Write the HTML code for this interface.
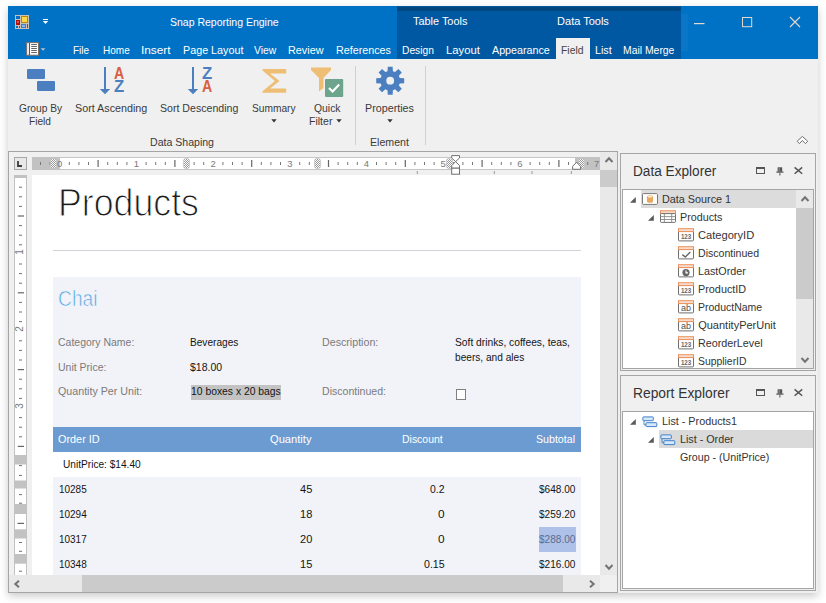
<!DOCTYPE html>
<html><head><meta charset="utf-8"><title>Snap Reporting Engine</title>
<style>
html,body{margin:0;padding:0;}
body{width:826px;height:603px;position:relative;overflow:hidden;background:#fff;font-family:"Liberation Sans", sans-serif;}
.a{position:absolute;}
.t{position:absolute;white-space:pre;font-family:"Liberation Sans", sans-serif;transform-origin:0 0;}
svg{position:absolute;overflow:visible;}
</style></head><body>
<div class="a" style="left:8px;top:6px;width:810px;height:587px;background:#F0F0F0;box-shadow:0 3px 8px rgba(0,0,0,.21);"></div>
<div class="a" style="left:8px;top:6px;width:810px;height:53px;background:#0072C6;"></div>
<div class="a" style="left:397px;top:6px;width:284px;height:53px;background:#0058A3;"></div>
<div class="a" style="left:397px;top:7px;width:284px;height:4px;background:#00467F;"></div>
<div class="a" style="left:681px;top:14px;width:7px;height:37px;background:#0A76C8;"></div>
<div class="a" style="left:556px;top:38px;width:34px;height:21px;background:#F0F0F0;"></div>
<svg style="left:15px;top:15px" width="14" height="14" viewBox="0 0 14 14">
<rect x="0" y="0" width="14" height="14" fill="#C9C3B6"/>
<rect x="1" y="1" width="4" height="3" fill="#0A6CC2"/>
<rect x="6" y="1" width="7" height="7" fill="#B8860B"/>
<rect x="7" y="2" width="5" height="5" fill="#FFD84A"/>
<rect x="1" y="5" width="4" height="5" fill="#B01010"/>
<rect x="2" y="6" width="2" height="2" fill="#E05050"/>
<rect x="1" y="11" width="2" height="2" fill="#0A6CC2"/><rect x="4" y="11" width="1" height="2" fill="#0A6CC2"/>
<rect x="6" y="9" width="5" height="4" fill="#4A78D0"/><rect x="7" y="10" width="3" height="2" fill="#8FB4F0"/>
<rect x="12" y="9" width="1" height="4" fill="#0A6CC2"/>
</svg>
<svg style="left:42px;top:18px" width="8" height="7" viewBox="0 0 8 7"><rect x="1" y="1" width="5" height="1" fill="#fff"/><path d="M0.8 3 L6.2 3 L3.5 6 Z" fill="#fff"/></svg>
<svg style="left:26px;top:42px" width="22" height="14" viewBox="0 0 22 14">
<rect x="0.7" y="0.6" width="11.8" height="12.6" fill="#fff" stroke="#7A6E66" stroke-width="1"/>
<rect x="2.9" y="1" width="1.1" height="12" fill="#555"/>
<rect x="5.2" y="2" width="5.7" height="1" fill="#666"/><rect x="5.2" y="4" width="5.7" height="1" fill="#666"/><rect x="5.2" y="6" width="5.7" height="1" fill="#666"/><rect x="5.2" y="8" width="5.7" height="1" fill="#666"/><rect x="5.2" y="10" width="5.7" height="1" fill="#666"/>
<path d="M14.7 6.2 L19.4 6.2 L17.05 8.7 Z" fill="#B9C3CC"/>
</svg>
<svg style="left:694px;top:23px" width="11" height="2"><rect x="0" y="0" width="10.5" height="1.2" fill="#E8D8CC"/></svg>
<svg style="left:742px;top:17px" width="12" height="12"><rect x="0.5" y="0.5" width="9.2" height="9.2" fill="none" stroke="#E8D8CC" stroke-width="1"/></svg>
<svg style="left:789px;top:16px" width="12" height="12"><path d="M1 1 L11 11 M11 1 L1 11" stroke="#E8D8CC" stroke-width="1.1" fill="none"/></svg>
<div class="a" style="left:27px;top:69px;width:18px;height:10px;background:#4B7FBF;border-radius:1px;"></div>
<div class="a" style="left:37px;top:81px;width:18px;height:10px;background:#4B7FBF;border-radius:1px;"></div>
<svg style="left:99.2px;top:66px" width="12" height="29" viewBox="0 0 12 29"><path d="M6 1 L6 24" stroke="#4B7FBF" stroke-width="2" fill="none"/><path d="M0.8 23 L6 28.3 L11.2 23 Z" fill="#4B7FBF"/></svg>
<svg style="left:187px;top:66px" width="12" height="29" viewBox="0 0 12 29"><path d="M6 1 L6 24" stroke="#4B7FBF" stroke-width="2" fill="none"/><path d="M0.8 23 L6 28.3 L11.2 23 Z" fill="#4B7FBF"/></svg>
<svg style="left:262px;top:69px" width="25" height="24" viewBox="0 0 25 24"><path d="M0.5 0 L24.2 0 L24.2 4.4 L8 4.4 L17.5 12 L8 19.6 L24.2 19.6 L24.2 23.8 L0.5 23.8 L0.5 22.3 L12.9 12 L0.5 1.6 Z" fill="#EEBE74"/></svg>
<svg style="left:311px;top:67px" width="34" height="31" viewBox="0 0 34 31"><path d="M0 0.5 L20 0.5 L20 3 L12.5 11 L12.5 21 L8 24.5 L8 11 L0 3 Z" fill="#EEBE74"/><rect x="14" y="12" width="18.2" height="18" rx="1" fill="#6CA48C"/><path d="M18 21 L21.6 24.5 L28.2 17.5" stroke="#fff" stroke-width="2.2" fill="none"/></svg>
<svg style="left:0;top:0" width="826" height="200"><path d="M387.51 71.17 L387.76 66.71 L392.64 66.71 L392.89 71.17 L395.04 72.06 L398.37 69.08 L401.82 72.53 L398.84 75.86 L399.73 78.01 L404.19 78.26 L404.19 83.14 L399.73 83.39 L398.84 85.54 L401.82 88.87 L398.37 92.32 L395.04 89.34 L392.89 90.23 L392.64 94.69 L387.76 94.69 L387.51 90.23 L385.36 89.34 L382.03 92.32 L378.58 88.87 L381.56 85.54 L380.67 83.39 L376.21 83.14 L376.21 78.26 L380.67 78.01 L381.56 75.86 L378.58 72.53 L382.03 69.08 L385.36 72.06 Z M386.30 80.70 a3.9 3.9 0 1 0 7.8 0 a3.9 3.9 0 1 0 -7.8 0 Z" fill="#4B7FBF" fill-rule="evenodd"/></svg>
<div class="a" style="left:355px;top:66px;width:1px;height:79px;background:#D0D0D0;"></div>
<div class="a" style="left:425px;top:66px;width:1px;height:79px;background:#D0D0D0;"></div>
<svg style="left:270.7px;top:119.1px" width="6" height="4" viewBox="0 0 6 4"><path d="M0.3 0.3 L5.7 0.3 L3 3.6 Z" fill="#333"/></svg>
<svg style="left:336.4px;top:119.1px" width="6" height="4" viewBox="0 0 6 4"><path d="M0.3 0.3 L5.7 0.3 L3 3.6 Z" fill="#333"/></svg>
<svg style="left:386.9px;top:119.1px" width="6" height="4" viewBox="0 0 6 4"><path d="M0.3 0.3 L5.7 0.3 L3 3.6 Z" fill="#333"/></svg>
<svg style="left:0;top:0" width="826" height="160"><path d="M802.4 136.4 L807.7 141.3 L805.4 143.6 L802.4 140.5 L799.4 143.6 L797.1 141.3 Z" fill="#fff" stroke="#6c6c6c" stroke-width="1" stroke-linejoin="miter"/></svg>
<div class="a" style="left:8px;top:151px;width:610px;height:442px;background:#F0F0F0;border:1px solid #A5A5A5;box-sizing:border-box;"></div>
<div class="a" style="left:32px;top:175px;width:568px;height:400px;background:#fff;"></div>
<div class="a" style="left:14px;top:157px;width:13px;height:13px;background:#E8E8E8;border:1px solid #A8A8A8;box-sizing:border-box;"></div>
<svg style="left:17px;top:160px" width="8" height="8"><path d="M1 0.9 L1 6 L5 6" stroke="#3c3c3c" stroke-width="1.8" fill="none"/></svg>
<div class="a" style="left:32px;top:157px;width:568px;height:13px;background:#fff;border:1px solid #C6C6C6;box-sizing:border-box;border-left:none;border-right:none;"></div>
<div class="a" style="left:32px;top:157px;width:28px;height:13px;background:#C2C2C2;"></div>
<div class="a" style="left:575px;top:157px;width:25px;height:13px;background:#C2C2C2;"></div>
<svg style="left:0;top:0" width="826" height="200"><rect x="40.0" y="162" width="1" height="3" fill="#777"/><rect x="49.6" y="162" width="1" height="3" fill="#777"/><rect x="68.8" y="162" width="1" height="3" fill="#777"/><rect x="78.4" y="162" width="1" height="3" fill="#777"/><rect x="88.0" y="162" width="1" height="3" fill="#777"/><rect x="97.5" y="160" width="1.2" height="7" fill="#666"/><rect x="107.2" y="162" width="1" height="3" fill="#777"/><rect x="116.8" y="162" width="1" height="3" fill="#777"/><rect x="126.4" y="162" width="1" height="3" fill="#777"/><rect x="145.6" y="162" width="1" height="3" fill="#777"/><rect x="155.2" y="162" width="1" height="3" fill="#777"/><rect x="164.8" y="162" width="1" height="3" fill="#777"/><rect x="174.3" y="160" width="1.2" height="7" fill="#666"/><rect x="184.0" y="162" width="1" height="3" fill="#777"/><rect x="193.6" y="162" width="1" height="3" fill="#777"/><rect x="203.2" y="162" width="1" height="3" fill="#777"/><rect x="222.4" y="162" width="1" height="3" fill="#777"/><rect x="232.0" y="162" width="1" height="3" fill="#777"/><rect x="241.6" y="162" width="1" height="3" fill="#777"/><rect x="251.1" y="160" width="1.2" height="7" fill="#666"/><rect x="260.8" y="162" width="1" height="3" fill="#777"/><rect x="270.4" y="162" width="1" height="3" fill="#777"/><rect x="280.0" y="162" width="1" height="3" fill="#777"/><rect x="299.2" y="162" width="1" height="3" fill="#777"/><rect x="308.8" y="162" width="1" height="3" fill="#777"/><rect x="318.4" y="162" width="1" height="3" fill="#777"/><rect x="327.9" y="160" width="1.2" height="7" fill="#666"/><rect x="337.6" y="162" width="1" height="3" fill="#777"/><rect x="347.2" y="162" width="1" height="3" fill="#777"/><rect x="356.8" y="162" width="1" height="3" fill="#777"/><rect x="376.0" y="162" width="1" height="3" fill="#777"/><rect x="385.6" y="162" width="1" height="3" fill="#777"/><rect x="395.2" y="162" width="1" height="3" fill="#777"/><rect x="404.7" y="160" width="1.2" height="7" fill="#666"/><rect x="414.4" y="162" width="1" height="3" fill="#777"/><rect x="424.0" y="162" width="1" height="3" fill="#777"/><rect x="433.6" y="162" width="1" height="3" fill="#777"/><rect x="452.8" y="162" width="1" height="3" fill="#777"/><rect x="462.4" y="162" width="1" height="3" fill="#777"/><rect x="472.0" y="162" width="1" height="3" fill="#777"/><rect x="481.5" y="160" width="1.2" height="7" fill="#666"/><rect x="491.2" y="162" width="1" height="3" fill="#777"/><rect x="500.8" y="162" width="1" height="3" fill="#777"/><rect x="510.4" y="162" width="1" height="3" fill="#777"/><rect x="529.6" y="162" width="1" height="3" fill="#777"/><rect x="539.2" y="162" width="1" height="3" fill="#777"/><rect x="548.8" y="162" width="1" height="3" fill="#777"/><rect x="558.3" y="160" width="1.2" height="7" fill="#666"/><rect x="568.0" y="162" width="1" height="3" fill="#777"/><rect x="577.6" y="162" width="1" height="3" fill="#777"/><rect x="587.2" y="162" width="1" height="3" fill="#777"/><rect x="416.8" y="171" width="1" height="3" fill="#999"/><rect x="493.8" y="171" width="1" height="3" fill="#999"/><rect x="531.5" y="171" width="1" height="3" fill="#999"/><rect x="570.8" y="171" width="1" height="3" fill="#999"/></svg>
<svg style="left:50.0px;top:158px" width="7" height="11" viewBox="0 0 7 11"><defs><pattern id="p53" width="2" height="2" patternUnits="userSpaceOnUse"><rect width="2" height="2" fill="#fff"/><rect width="1" height="1" fill="#999"/><rect x="1" y="1" width="1" height="1" fill="#999"/></pattern></defs><rect x="0.4" y="0.5" width="6.2" height="10" rx="2.6" fill="url(#p53)" stroke="#C4C4C4" stroke-width="0.7"/></svg>
<svg style="left:183.0px;top:158px" width="7" height="11" viewBox="0 0 7 11"><defs><pattern id="p186" width="2" height="2" patternUnits="userSpaceOnUse"><rect width="2" height="2" fill="#fff"/><rect width="1" height="1" fill="#999"/><rect x="1" y="1" width="1" height="1" fill="#999"/></pattern></defs><rect x="0.4" y="0.5" width="6.2" height="10" rx="2.6" fill="url(#p186)" stroke="#C4C4C4" stroke-width="0.7"/></svg>
<svg style="left:314.2px;top:158px" width="7" height="11" viewBox="0 0 7 11"><defs><pattern id="p317" width="2" height="2" patternUnits="userSpaceOnUse"><rect width="2" height="2" fill="#fff"/><rect width="1" height="1" fill="#999"/><rect x="1" y="1" width="1" height="1" fill="#999"/></pattern></defs><rect x="0.4" y="0.5" width="6.2" height="10" rx="2.6" fill="url(#p317)" stroke="#C4C4C4" stroke-width="0.7"/></svg>
<svg style="left:445.9px;top:158px" width="7" height="11" viewBox="0 0 7 11"><defs><pattern id="p449" width="2" height="2" patternUnits="userSpaceOnUse"><rect width="2" height="2" fill="#fff"/><rect width="1" height="1" fill="#999"/><rect x="1" y="1" width="1" height="1" fill="#999"/></pattern></defs><rect x="0.4" y="0.5" width="6.2" height="10" rx="2.6" fill="url(#p449)" stroke="#C4C4C4" stroke-width="0.7"/></svg>
<svg style="left:577.9px;top:158px" width="7" height="11" viewBox="0 0 7 11"><defs><pattern id="p581" width="2" height="2" patternUnits="userSpaceOnUse"><rect width="2" height="2" fill="#fff"/><rect width="1" height="1" fill="#999"/><rect x="1" y="1" width="1" height="1" fill="#999"/></pattern></defs><rect x="0.4" y="0.5" width="6.2" height="10" rx="2.6" fill="url(#p581)" stroke="#C4C4C4" stroke-width="0.7"/></svg>
<svg style="left:450px;top:154px" width="12" height="22" viewBox="0 0 12 22"><path d="M1.7 1.6 L9.5 1.6 L9.5 4 L5.6 7.6 L1.7 4 Z" fill="#fff" stroke="#707070" stroke-width="1"/><path d="M1.7 14.2 L1.7 11.6 L5.6 7.6 L9.5 11.6 L9.5 14.2 Z" fill="#fff" stroke="#707070" stroke-width="1"/><rect x="1.7" y="14.2" width="7.8" height="6" fill="#fff" stroke="#707070" stroke-width="1"/></svg>
<svg style="left:571px;top:160px" width="12" height="11" viewBox="0 0 12 11"><path d="M1.6 9.3 L1.6 6.4 L5.6 2.2 L9.6 6.4 L9.6 9.3 Z" fill="#fff" stroke="#707070" stroke-width="1"/></svg>
<div class="a" style="left:14px;top:175px;width:13px;height:400px;background:#fff;border:1px solid #C2C2C2;box-sizing:border-box;border-top:none;border-bottom:none;"></div>
<div class="a" style="left:15px;top:175px;width:11px;height:3px;background:#C2C2C2;"></div>
<svg style="left:0;top:0" width="40" height="603"><rect x="19" y="186.7" width="3" height="1" fill="#707070"/><rect x="19" y="196.3" width="3" height="1" fill="#707070"/><rect x="19" y="205.9" width="3" height="1" fill="#707070"/><rect x="17.8" y="215.4" width="6.2" height="1.2" fill="#666"/><rect x="19" y="225.1" width="3" height="1" fill="#707070"/><rect x="19" y="234.7" width="3" height="1" fill="#707070"/><rect x="19" y="244.3" width="3" height="1" fill="#707070"/><rect x="19" y="263.5" width="3" height="1" fill="#707070"/><rect x="19" y="273.1" width="3" height="1" fill="#707070"/><rect x="19" y="282.7" width="3" height="1" fill="#707070"/><rect x="17.8" y="292.2" width="6.2" height="1.2" fill="#666"/><rect x="19" y="301.9" width="3" height="1" fill="#707070"/><rect x="19" y="311.5" width="3" height="1" fill="#707070"/><rect x="19" y="321.1" width="3" height="1" fill="#707070"/><rect x="19" y="340.3" width="3" height="1" fill="#707070"/><rect x="19" y="349.9" width="3" height="1" fill="#707070"/><rect x="19" y="359.5" width="3" height="1" fill="#707070"/><rect x="17.8" y="369.0" width="6.2" height="1.2" fill="#666"/><rect x="19" y="378.7" width="3" height="1" fill="#707070"/><rect x="19" y="388.3" width="3" height="1" fill="#707070"/><rect x="19" y="397.9" width="3" height="1" fill="#707070"/><rect x="19" y="417.1" width="3" height="1" fill="#707070"/><rect x="19" y="426.7" width="3" height="1" fill="#707070"/><rect x="19" y="436.3" width="3" height="1" fill="#707070"/><rect x="17.8" y="445.8" width="6.2" height="1.2" fill="#666"/><rect x="15" y="455" width="11" height="9.5" fill="#C2C2C2"/><rect x="15" y="480.5" width="11" height="8.0" fill="#C2C2C2"/><rect x="15" y="504" width="11" height="10" fill="#C2C2C2"/><rect x="15" y="529.3" width="11" height="9.200000000000045" fill="#C2C2C2"/><rect x="15" y="554" width="11" height="9.700000000000045" fill="#C2C2C2"/><rect x="19" y="465.1" width="3" height="1" fill="#707070"/><rect x="19" y="474.9" width="3" height="1" fill="#707070"/><rect x="19" y="494.1" width="3" height="1" fill="#707070"/><rect x="19" y="502.7" width="3" height="1" fill="#707070"/><rect x="19" y="542.0" width="3" height="1" fill="#707070"/><rect x="19" y="550.8" width="3" height="1" fill="#707070"/><rect x="19" y="570.7" width="3" height="1" fill="#707070"/><rect x="17.5" y="522.8" width="6.5" height="1.2" fill="#666"/></svg>
<span class="t" style="left:14.6px;top:247.1px;width:10px;height:10px;font-size:10px;line-height:10px;color:#7A7A7A;transform:rotate(-90deg);transform-origin:50% 50%;text-align:center;">1</span>
<span class="t" style="left:14.6px;top:323.9px;width:10px;height:10px;font-size:10px;line-height:10px;color:#7A7A7A;transform:rotate(-90deg);transform-origin:50% 50%;text-align:center;">2</span>
<span class="t" style="left:14.6px;top:400.7px;width:10px;height:10px;font-size:10px;line-height:10px;color:#7A7A7A;transform:rotate(-90deg);transform-origin:50% 50%;text-align:center;">3</span>
<div class="a" style="left:600px;top:152px;width:17px;height:423px;background:#E9E9E9;"></div>
<div class="a" style="left:600px;top:170px;width:17px;height:17px;background:#CBCBCB;"></div>
<div class="a" style="left:9px;top:575px;width:591px;height:17px;background:#E9E9E9;"></div>
<div class="a" style="left:82px;top:575px;width:481px;height:17px;background:#CBCBCB;"></div>
<svg style="left:608.5px;top:160px" width="1" height="1"><path d="M-3.5 2 L0 -1.7 L3.5 2" stroke="#737373" stroke-width="2" fill="none"/></svg>
<svg style="left:608.5px;top:566.5px" width="1" height="1"><path d="M-3.5 -2 L0 1.7 L3.5 -2" stroke="#737373" stroke-width="2" fill="none"/></svg>
<svg style="left:16.5px;top:583.5px" width="1" height="1"><path d="M2 -3.3 L-1.7 0 L2 3.3" stroke="#737373" stroke-width="2" fill="none"/></svg>
<svg style="left:591.5px;top:583.5px" width="1" height="1"><path d="M-2 -3.3 L1.7 0 L-2 3.3" stroke="#737373" stroke-width="2" fill="none"/></svg>
<div class="a" style="left:53px;top:250px;width:528px;height:1px;background:#D2D2D8;"></div>
<div class="a" style="left:53px;top:277px;width:528px;height:150px;background:#F2F3F8;"></div>
<div class="a" style="left:191px;top:385px;width:90px;height:15px;background:#C3C3C3;"></div>
<div class="a" style="left:456px;top:389px;width:10px;height:11px;background:#fff;border:1px solid #808080;box-sizing:border-box;"></div>
<div class="a" style="left:53px;top:427px;width:528px;height:25px;background:#6C9BD1;"></div>
<div class="a" style="left:53px;top:477px;width:528px;height:98px;background:#F2F3F8;"></div>
<div class="a" style="left:539px;top:527px;width:37px;height:25px;background:#AEC2E9;"></div>
<div class="a" style="left:620px;top:153px;width:196px;height:218px;background:#F0F0F0;border:1px solid #A5A5A5;box-sizing:border-box;"></div>
<div class="a" style="left:622px;top:189px;width:192px;height:180px;background:#fff;border:1px solid #A5A5A5;box-sizing:border-box;"></div>
<svg style="left:756px;top:167px" width="10" height="8"><rect x="0.5" y="0.5" width="8" height="6" fill="none" stroke="#555" stroke-width="1"/><rect x="0" y="0" width="9" height="2" fill="#555"/></svg>
<svg style="left:776px;top:167px" width="8" height="9" viewBox="0 0 8 9"><rect x="1.6" y="0.3" width="4.6" height="4.4" fill="#555"/><rect x="2.6" y="1" width="1.2" height="3" fill="#8a8a8a"/><rect x="0.3" y="4.5" width="7.2" height="1.2" fill="#555"/><rect x="3.4" y="5.7" width="1" height="2.8" fill="#555"/></svg>
<svg style="left:794px;top:167px" width="9" height="8" viewBox="0 0 9 8"><path d="M0.6 0.4 L8.2 6.8 M8.2 0.4 L0.6 6.8" stroke="#555" stroke-width="1.5" fill="none"/></svg>
<div class="a" style="left:620px;top:375px;width:196px;height:216px;background:#F0F0F0;border:1px solid #A5A5A5;box-sizing:border-box;"></div>
<div class="a" style="left:622px;top:411px;width:192px;height:178px;background:#fff;border:1px solid #A5A5A5;box-sizing:border-box;"></div>
<svg style="left:756px;top:389px" width="10" height="8"><rect x="0.5" y="0.5" width="8" height="6" fill="none" stroke="#555" stroke-width="1"/><rect x="0" y="0" width="9" height="2" fill="#555"/></svg>
<svg style="left:776px;top:389px" width="8" height="9" viewBox="0 0 8 9"><rect x="1.6" y="0.3" width="4.6" height="4.4" fill="#555"/><rect x="2.6" y="1" width="1.2" height="3" fill="#8a8a8a"/><rect x="0.3" y="4.5" width="7.2" height="1.2" fill="#555"/><rect x="3.4" y="5.7" width="1" height="2.8" fill="#555"/></svg>
<svg style="left:794px;top:389px" width="9" height="8" viewBox="0 0 9 8"><path d="M0.6 0.4 L8.2 6.8 M8.2 0.4 L0.6 6.8" stroke="#555" stroke-width="1.5" fill="none"/></svg>
<div class="a" style="left:641px;top:190px;width:155px;height:18px;background:#DCDCDC;"></div>
<div class="a" style="left:796px;top:190px;width:17px;height:178px;background:#E9E9E9;"></div>
<div class="a" style="left:796px;top:208px;width:17px;height:91px;background:#CBCBCB;"></div>
<svg style="left:804.5px;top:199px" width="1" height="1"><path d="M-3.5 2 L0 -1.7 L3.5 2" stroke="#737373" stroke-width="2" fill="none"/></svg>
<svg style="left:804.5px;top:360px" width="1" height="1"><path d="M-3.5 -2 L0 1.7 L3.5 -2" stroke="#737373" stroke-width="2" fill="none"/></svg>
<svg style="left:630.2px;top:197.2px" width="6" height="6"><path d="M5.8 0 L5.8 5.8 L0 5.8 Z" fill="#595959"/></svg>
<svg style="left:648.2px;top:215.1px" width="6" height="6"><path d="M5.8 0 L5.8 5.8 L0 5.8 Z" fill="#595959"/></svg>
<svg style="left:642px;top:193px" width="16" height="13" viewBox="0 0 16 13"><rect x="0.5" y="0.6" width="15" height="10.8" rx="1" fill="#fff" stroke="#777" stroke-width="1"/><rect x="4.9" y="2.5" width="6.2" height="7.2" rx="1.8" fill="#E8A860"/><ellipse cx="8" cy="3.7" rx="2.2" ry="0.9" fill="#FCEBD6"/></svg>
<svg style="left:660px;top:210px" width="16" height="14" viewBox="0 0 16 14"><rect x="0.5" y="0.8" width="15" height="3" fill="#FBD9C5" stroke="#E8905F" stroke-width="1"/><rect x="0.5" y="3.6" width="15" height="8.8" rx="0.8" fill="#fff" stroke="#707070" stroke-width="1"/><path d="M0.5 6.6 H15.5 M0.5 9.5 H15.5 M4.4 3.6 V12.4 M11.7 3.6 V12.4" stroke="#8a8a8a" stroke-width="0.9" fill="none"/></svg>
<svg style="left:678px;top:228.2px" width="16" height="14" viewBox="0 0 16 14"><path d="M0.5 3.4 V12 Q0.5 12.9 1.4 12.9 H14.6 Q15.5 12.9 15.5 12 V3.4 Z" fill="#fff" stroke="#707070" stroke-width="1"/><rect x="0.5" y="0.7" width="15" height="2.9" fill="#FBDCCB" stroke="#EA935F" stroke-width="1"/><text x="8.1" y="11.3" font-size="7.3" font-weight="700" text-anchor="middle" fill="#666" font-family="Liberation Sans" textLength="10.4" lengthAdjust="spacingAndGlyphs">123</text></svg>
<svg style="left:678px;top:246.2px" width="16" height="14" viewBox="0 0 16 14"><path d="M0.5 3.4 V12 Q0.5 12.9 1.4 12.9 H14.6 Q15.5 12.9 15.5 12 V3.4 Z" fill="#fff" stroke="#707070" stroke-width="1"/><rect x="0.5" y="0.7" width="15" height="2.9" fill="#FBDCCB" stroke="#EA935F" stroke-width="1"/><path d="M4.4 8.6 L7.3 11.1 L12.3 6" stroke="#666" stroke-width="1.4" fill="none"/></svg>
<svg style="left:678px;top:264.2px" width="16" height="14" viewBox="0 0 16 14"><path d="M0.5 3.4 V12 Q0.5 12.9 1.4 12.9 H14.6 Q15.5 12.9 15.5 12 V3.4 Z" fill="#fff" stroke="#707070" stroke-width="1"/><rect x="0.5" y="0.7" width="15" height="2.9" fill="#FBDCCB" stroke="#EA935F" stroke-width="1"/><circle cx="8" cy="8.6" r="3.6" fill="#666"/><path d="M8 6.6 V8.9 H10" stroke="#fff" stroke-width="1.1" fill="none"/></svg>
<svg style="left:678px;top:282.2px" width="16" height="14" viewBox="0 0 16 14"><path d="M0.5 3.4 V12 Q0.5 12.9 1.4 12.9 H14.6 Q15.5 12.9 15.5 12 V3.4 Z" fill="#fff" stroke="#707070" stroke-width="1"/><rect x="0.5" y="0.7" width="15" height="2.9" fill="#FBDCCB" stroke="#EA935F" stroke-width="1"/><text x="8.1" y="11.3" font-size="7.3" font-weight="700" text-anchor="middle" fill="#666" font-family="Liberation Sans" textLength="10.4" lengthAdjust="spacingAndGlyphs">123</text></svg>
<svg style="left:678px;top:300.2px" width="16" height="14" viewBox="0 0 16 14"><path d="M0.5 3.4 V12 Q0.5 12.9 1.4 12.9 H14.6 Q15.5 12.9 15.5 12 V3.4 Z" fill="#fff" stroke="#707070" stroke-width="1"/><rect x="0.5" y="0.7" width="15" height="2.9" fill="#FBDCCB" stroke="#EA935F" stroke-width="1"/><text x="8" y="11.4" font-size="9" text-anchor="middle" fill="#505050" font-family="Liberation Sans">ab</text></svg>
<svg style="left:678px;top:318.2px" width="16" height="14" viewBox="0 0 16 14"><path d="M0.5 3.4 V12 Q0.5 12.9 1.4 12.9 H14.6 Q15.5 12.9 15.5 12 V3.4 Z" fill="#fff" stroke="#707070" stroke-width="1"/><rect x="0.5" y="0.7" width="15" height="2.9" fill="#FBDCCB" stroke="#EA935F" stroke-width="1"/><text x="8" y="11.4" font-size="9" text-anchor="middle" fill="#505050" font-family="Liberation Sans">ab</text></svg>
<svg style="left:678px;top:336.2px" width="16" height="14" viewBox="0 0 16 14"><path d="M0.5 3.4 V12 Q0.5 12.9 1.4 12.9 H14.6 Q15.5 12.9 15.5 12 V3.4 Z" fill="#fff" stroke="#707070" stroke-width="1"/><rect x="0.5" y="0.7" width="15" height="2.9" fill="#FBDCCB" stroke="#EA935F" stroke-width="1"/><text x="8.1" y="11.3" font-size="7.3" font-weight="700" text-anchor="middle" fill="#666" font-family="Liberation Sans" textLength="10.4" lengthAdjust="spacingAndGlyphs">123</text></svg>
<svg style="left:678px;top:354.2px" width="16" height="14" viewBox="0 0 16 14"><path d="M0.5 3.4 V12 Q0.5 12.9 1.4 12.9 H14.6 Q15.5 12.9 15.5 12 V3.4 Z" fill="#fff" stroke="#707070" stroke-width="1"/><rect x="0.5" y="0.7" width="15" height="2.9" fill="#FBDCCB" stroke="#EA935F" stroke-width="1"/><text x="8.1" y="11.3" font-size="7.3" font-weight="700" text-anchor="middle" fill="#666" font-family="Liberation Sans" textLength="10.4" lengthAdjust="spacingAndGlyphs">123</text></svg>
<div class="a" style="left:622px;top:368px;width:192px;height:1px;background:#A5A5A5;"></div>
<div class="a" style="left:621px;top:369px;width:194px;height:1px;background:#F0F0F0;"></div>
<div class="a" style="left:659px;top:430px;width:154px;height:18px;background:#DADADA;"></div>
<svg style="left:630.2px;top:419.2px" width="6" height="6"><path d="M5.8 0 L5.8 5.8 L0 5.8 Z" fill="#595959"/></svg>
<svg style="left:648.2px;top:437.1px" width="6" height="6"><path d="M5.8 0 L5.8 5.8 L0 5.8 Z" fill="#595959"/></svg>
<svg style="left:641.5px;top:415.6px" width="16" height="12" viewBox="0 0 16 12"><path d="M2 4.5 V8.8 H4" stroke="#4F8FD0" stroke-width="1" fill="none"/><rect x="0.9" y="0.9" width="10.4" height="3.8" rx="0.6" fill="#D6E8FA" stroke="#3F82CC" stroke-width="1"/><rect x="3.9" y="6.7" width="10.9" height="3.9" rx="0.6" fill="#D6E8FA" stroke="#3F82CC" stroke-width="1"/></svg>
<svg style="left:659.5px;top:433.6px" width="16" height="12" viewBox="0 0 16 12"><path d="M2 4.5 V8.8 H4" stroke="#4F8FD0" stroke-width="1" fill="none"/><rect x="0.9" y="0.9" width="10.4" height="3.8" rx="0.6" fill="#D6E8FA" stroke="#3F82CC" stroke-width="1"/><rect x="3.9" y="6.7" width="10.9" height="3.9" rx="0.6" fill="#D6E8FA" stroke="#3F82CC" stroke-width="1"/></svg>
<span class="t" style="left:169.52px;top:17.00px;font-size:11px;line-height:11px;color:#fff;transform:scaleX(0.9547);">Snap Reporting Engine</span>
<span class="t" style="left:413.10px;top:16.00px;font-size:11px;line-height:11px;color:#fff;transform:scaleX(0.9919);">Table Tools</span>
<span class="t" style="left:557.09px;top:16.00px;font-size:11px;line-height:11px;color:#fff;">Data Tools</span>
<span class="t" style="left:73.35px;top:45.00px;font-size:11px;line-height:11px;color:#fff;transform:scaleX(0.9078);">File</span>
<span class="t" style="left:102.65px;top:45.00px;font-size:11px;line-height:11px;color:#fff;transform:scaleX(0.9099);">Home</span>
<span class="t" style="left:141.44px;top:45.00px;font-size:11px;line-height:11px;color:#fff;transform:scaleX(1.0721);">Insert</span>
<span class="t" style="left:182.50px;top:45.00px;font-size:11px;line-height:11px;color:#fff;transform:scaleX(0.9776);">Page Layout</span>
<span class="t" style="left:254.43px;top:45.00px;font-size:11px;line-height:11px;color:#fff;transform:scaleX(0.9384);">View</span>
<span class="t" style="left:288.30px;top:45.00px;font-size:11px;line-height:11px;color:#fff;transform:scaleX(0.9840);">Review</span>
<span class="t" style="left:335.51px;top:45.00px;font-size:11px;line-height:11px;color:#fff;transform:scaleX(0.9757);">References</span>
<span class="t" style="left:402.14px;top:45.00px;font-size:11px;line-height:11px;color:#fff;transform:scaleX(0.9314);">Design</span>
<span class="t" style="left:446.17px;top:45.00px;font-size:11px;line-height:11px;color:#fff;transform:scaleX(1.0263);">Layout</span>
<span class="t" style="left:491.71px;top:45.00px;font-size:11px;line-height:11px;color:#fff;transform:scaleX(0.9742);">Appearance</span>
<span class="t" style="left:595.41px;top:45.00px;font-size:11px;line-height:11px;color:#fff;transform:scaleX(0.9752);">List</span>
<span class="t" style="left:623.23px;top:45.00px;font-size:11px;line-height:11px;color:#fff;transform:scaleX(0.9447);">Mail Merge</span>
<span class="t" style="left:561.23px;top:45.00px;font-size:11px;line-height:11px;color:#444;transform:scaleX(0.9436);">Field</span>
<span class="t" style="left:113.90px;top:66.00px;font-size:16px;line-height:16px;color:#D9603F;transform:scaleX(0.8822);font-weight:700;">A</span>
<span class="t" style="left:113.75px;top:79.00px;font-size:16px;line-height:16px;color:#4B7FBF;transform:scaleX(1.0428);font-weight:700;">Z</span>
<span class="t" style="left:201.95px;top:66.00px;font-size:16px;line-height:16px;color:#4B7FBF;transform:scaleX(1.0428);font-weight:700;">Z</span>
<span class="t" style="left:202.10px;top:79.00px;font-size:16px;line-height:16px;color:#D9603F;transform:scaleX(0.8822);font-weight:700;">A</span>
<span class="t" style="left:18.94px;top:103.00px;font-size:11px;line-height:11px;color:#3A3A3A;transform:scaleX(0.9297);">Group By</span>
<span class="t" style="left:29.14px;top:116.00px;font-size:11px;line-height:11px;color:#3A3A3A;transform:scaleX(0.9227);">Field</span>
<span class="t" style="left:75.41px;top:103.00px;font-size:11px;line-height:11px;color:#3A3A3A;transform:scaleX(0.9770);">Sort Ascending</span>
<span class="t" style="left:160.31px;top:103.00px;font-size:11px;line-height:11px;color:#3A3A3A;transform:scaleX(0.9628);">Sort Descending</span>
<span class="t" style="left:251.64px;top:103.00px;font-size:11px;line-height:11px;color:#3A3A3A;transform:scaleX(0.9264);">Summary</span>
<span class="t" style="left:313.63px;top:103.00px;font-size:11px;line-height:11px;color:#3A3A3A;transform:scaleX(0.9422);">Quick</span>
<span class="t" style="left:308.52px;top:116.00px;font-size:11px;line-height:11px;color:#3A3A3A;transform:scaleX(0.9569);">Filter</span>
<span class="t" style="left:365.21px;top:103.00px;font-size:11px;line-height:11px;color:#3A3A3A;transform:scaleX(0.9753);">Properties</span>
<span class="t" style="left:149.72px;top:137.00px;font-size:11px;line-height:11px;color:#3A3A3A;transform:scaleX(0.9599);">Data Shaping</span>
<span class="t" style="left:370.01px;top:137.00px;font-size:11px;line-height:11px;color:#3A3A3A;transform:scaleX(0.9638);">Element</span>
<span class="t" style="left:56.98px;top:159.00px;font-size:9.5px;line-height:9.5px;color:#7A7A7A;">0</span>
<span class="t" style="left:133.70px;top:159.00px;font-size:9.5px;line-height:9.5px;color:#7A7A7A;">1</span>
<span class="t" style="left:210.42px;top:159.00px;font-size:9.5px;line-height:9.5px;color:#7A7A7A;">2</span>
<span class="t" style="left:287.14px;top:159.00px;font-size:9.5px;line-height:9.5px;color:#7A7A7A;">3</span>
<span class="t" style="left:363.86px;top:159.00px;font-size:9.5px;line-height:9.5px;color:#7A7A7A;">4</span>
<span class="t" style="left:440.58px;top:159.00px;font-size:9.5px;line-height:9.5px;color:#7A7A7A;">5</span>
<span class="t" style="left:517.30px;top:159.00px;font-size:9.5px;line-height:9.5px;color:#7A7A7A;">6</span>
<span class="t" style="left:594.02px;top:159.00px;font-size:9.5px;line-height:9.5px;color:#7A7A7A;">7</span>
<span class="t" style="left:58.01px;top:183.00px;font-size:39.6px;line-height:39.6px;color:#1c1c1c;transform:scaleX(0.9025);-webkit-text-stroke:1.1px #fff;">Products</span>
<span class="t" style="left:58.20px;top:288.00px;font-size:22.5px;line-height:22.5px;color:#48A2E3;transform:scaleX(0.8546);-webkit-text-stroke:0.7px #F2F3F8;">Chai</span>
<span class="t" style="left:58.12px;top:337.00px;font-size:11px;line-height:11px;color:#7A7A7A;transform:scaleX(0.9526);">Category Name:</span>
<span class="t" style="left:190.24px;top:337.00px;font-size:11px;line-height:11px;color:#141414;transform:scaleX(0.9184);">Beverages</span>
<span class="t" style="left:58.12px;top:362.00px;font-size:11px;line-height:11px;color:#7A7A7A;transform:scaleX(0.9537);">Unit Price:</span>
<span class="t" style="left:190.22px;top:362.00px;font-size:11px;line-height:11px;color:#141414;transform:scaleX(0.9538);">$18.00</span>
<span class="t" style="left:58.11px;top:386.00px;font-size:11px;line-height:11px;color:#7A7A7A;transform:scaleX(0.9709);">Quantity Per Unit:</span>
<span class="t" style="left:190.63px;top:386.00px;font-size:11px;line-height:11px;color:#141414;transform:scaleX(0.9412);">10 boxes x 20 bags</span>
<span class="t" style="left:322.31px;top:337.00px;font-size:11px;line-height:11px;color:#7A7A7A;transform:scaleX(0.9694);">Description:</span>
<span class="t" style="left:455.24px;top:337.00px;font-size:11px;line-height:11px;color:#141414;transform:scaleX(0.9318);">Soft drinks, coffees, teas,</span>
<span class="t" style="left:455.24px;top:352.00px;font-size:11px;line-height:11px;color:#141414;transform:scaleX(0.9200);">beers, and ales</span>
<span class="t" style="left:322.32px;top:386.00px;font-size:11px;line-height:11px;color:#7A7A7A;transform:scaleX(0.9602);">Discontinued:</span>
<span class="t" style="left:58.10px;top:434.00px;font-size:11px;line-height:11px;color:#fff;transform:scaleX(0.9884);">Order ID</span>
<span class="t" style="left:269.98px;top:434.00px;font-size:11px;line-height:11px;color:#fff;transform:scaleX(1.0130);">Quantity</span>
<span class="t" style="left:402.42px;top:434.00px;font-size:11px;line-height:11px;color:#fff;transform:scaleX(0.9510);">Discount</span>
<span class="t" style="left:536.41px;top:434.00px;font-size:11px;line-height:11px;color:#fff;transform:scaleX(0.9659);">Subtotal</span>
<span class="t" style="left:62.54px;top:459.00px;font-size:11px;line-height:11px;color:#141414;transform:scaleX(0.9207);">UnitPrice: $14.40</span>
<span class="t" style="left:58.75px;top:484.00px;font-size:11px;line-height:11px;color:#141414;transform:scaleX(0.9054);">10285</span>
<span class="t" style="left:299.89px;top:484.00px;font-size:11px;line-height:11px;color:#141414;transform:scaleX(1.0041);">45</span>
<span class="t" style="left:429.92px;top:484.00px;font-size:11px;line-height:11px;color:#141414;transform:scaleX(0.9479);">0.2</span>
<span class="t" style="left:538.55px;top:484.00px;font-size:11px;line-height:11px;color:#141414;transform:scaleX(0.9154);">$648.00</span>
<span class="t" style="left:58.75px;top:509.00px;font-size:11px;line-height:11px;color:#141414;transform:scaleX(0.9054);">10294</span>
<span class="t" style="left:299.89px;top:509.00px;font-size:11px;line-height:11px;color:#141414;transform:scaleX(1.0041);">18</span>
<span class="t" style="left:437.74px;top:509.00px;font-size:11px;line-height:11px;color:#141414;transform:scaleX(1.0776);">0</span>
<span class="t" style="left:538.55px;top:509.00px;font-size:11px;line-height:11px;color:#141414;transform:scaleX(0.9154);">$259.20</span>
<span class="t" style="left:58.75px;top:534.00px;font-size:11px;line-height:11px;color:#141414;transform:scaleX(0.9054);">10317</span>
<span class="t" style="left:299.89px;top:534.00px;font-size:11px;line-height:11px;color:#141414;transform:scaleX(1.0041);">20</span>
<span class="t" style="left:437.74px;top:534.00px;font-size:11px;line-height:11px;color:#141414;transform:scaleX(1.0776);">0</span>
<span class="t" style="left:538.55px;top:534.00px;font-size:11px;line-height:11px;color:#5B6C8E;transform:scaleX(0.9154);">$288.00</span>
<span class="t" style="left:58.75px;top:559.00px;font-size:11px;line-height:11px;color:#141414;transform:scaleX(0.9054);">10348</span>
<span class="t" style="left:299.89px;top:559.00px;font-size:11px;line-height:11px;color:#141414;transform:scaleX(1.0041);">15</span>
<span class="t" style="left:423.71px;top:559.00px;font-size:11px;line-height:11px;color:#141414;transform:scaleX(0.9663);">0.15</span>
<span class="t" style="left:538.55px;top:559.00px;font-size:11px;line-height:11px;color:#141414;transform:scaleX(0.9154);">$216.00</span>
<span class="t" style="left:633.43px;top:164.00px;font-size:14px;line-height:14px;color:#333;transform:scaleX(0.9732);">Data Explorer</span>
<span class="t" style="left:633.42px;top:386.00px;font-size:14px;line-height:14px;color:#333;transform:scaleX(0.9852);">Report Explorer</span>
<span class="t" style="left:662.00px;top:194.00px;font-size:11px;line-height:11px;color:#333;transform:scaleX(0.9825);">Data Source 1</span>
<span class="t" style="left:680.31px;top:212.00px;font-size:11px;line-height:11px;color:#333;transform:scaleX(0.9765);">Products</span>
<span class="t" style="left:698.18px;top:230.00px;font-size:11px;line-height:11px;color:#333;transform:scaleX(1.0101);">CategoryID</span>
<span class="t" style="left:698.22px;top:248.00px;font-size:11px;line-height:11px;color:#333;transform:scaleX(0.9608);">Discontinued</span>
<span class="t" style="left:698.21px;top:266.00px;font-size:11px;line-height:11px;color:#333;transform:scaleX(0.9771);">LastOrder</span>
<span class="t" style="left:698.20px;top:284.00px;font-size:11px;line-height:11px;color:#333;transform:scaleX(0.9852);">ProductID</span>
<span class="t" style="left:698.22px;top:302.00px;font-size:11px;line-height:11px;color:#333;transform:scaleX(0.9544);">ProductName</span>
<span class="t" style="left:698.19px;top:320.00px;font-size:11px;line-height:11px;color:#333;">QuantityPerUnit</span>
<span class="t" style="left:698.20px;top:338.00px;font-size:11px;line-height:11px;color:#333;transform:scaleX(0.9781);">ReorderLevel</span>
<span class="t" style="left:698.23px;top:356.00px;font-size:11px;line-height:11px;color:#333;transform:scaleX(0.9443);">SupplierID</span>
<span class="t" style="left:661.90px;top:416.00px;font-size:11px;line-height:11px;color:#333;transform:scaleX(0.9801);">List - Products1</span>
<span class="t" style="left:680.01px;top:434.00px;font-size:11px;line-height:11px;color:#333;transform:scaleX(0.9761);">List - Order</span>
<span class="t" style="left:680.01px;top:452.00px;font-size:11px;line-height:11px;color:#333;transform:scaleX(0.9675);">Group - (UnitPrice)</span>
</body></html>
